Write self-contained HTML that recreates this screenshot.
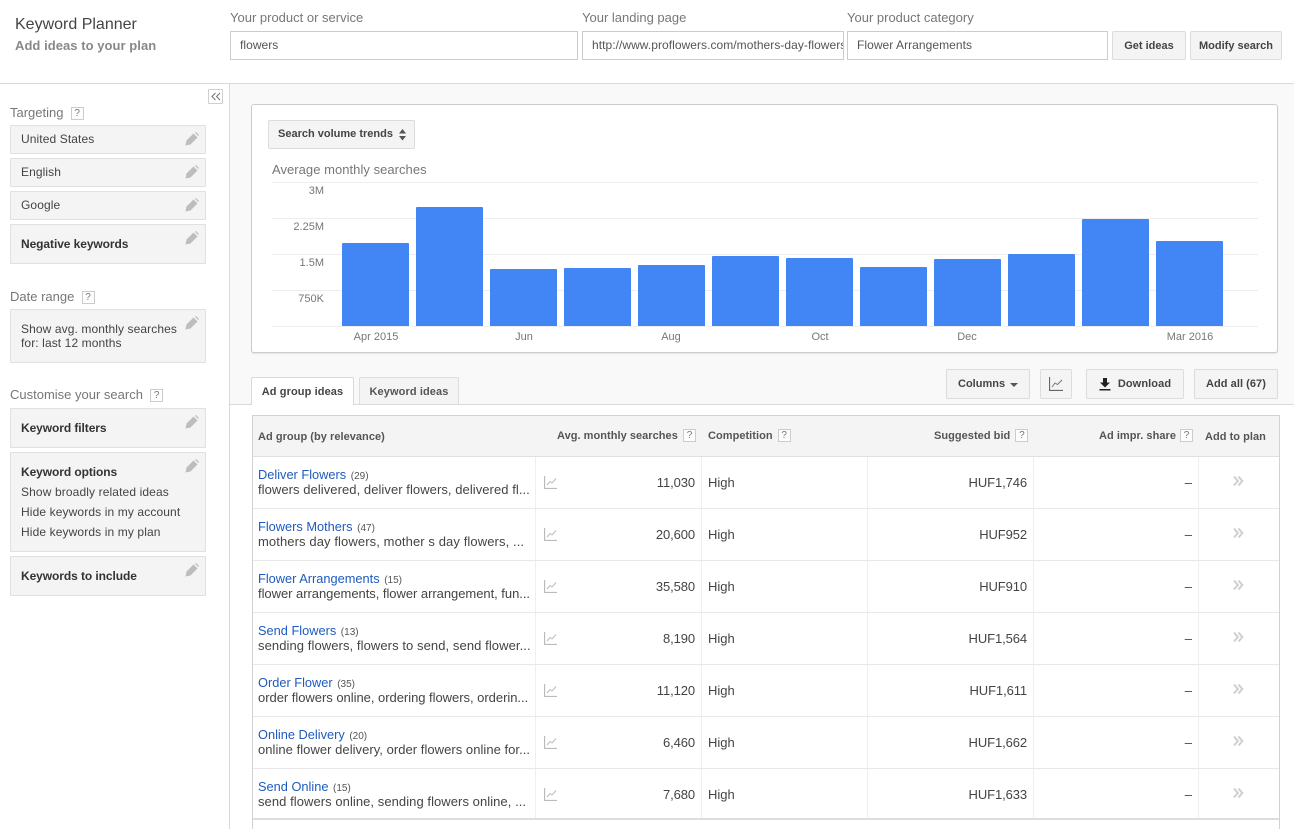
<!DOCTYPE html>
<html><head><meta charset="utf-8">
<style>
html,body{margin:0;padding:0;background:#fff}
html{width:1294px;height:829px;overflow:hidden}
body{width:1294px;height:829px;position:relative;overflow:hidden;font-family:"Liberation Sans",sans-serif;font-size:12px;color:#444}
div,span.a,a,svg.a{position:absolute;box-sizing:border-box;white-space:nowrap}
.lab{font-size:13px;color:#777;line-height:16px}
.inp{top:31px;height:29px;border:1px solid #ccc;background:#fff;font-size:12px;color:#555;line-height:27px;padding-left:9px;overflow:hidden;letter-spacing:.05px}
.btn{background:#f4f4f4;border:1px solid #dcdcdc;border-radius:2px;font-weight:bold;font-size:11px;color:#444;text-align:center}
.q{display:inline-block;width:13px;height:13px;border:1px solid #ccc;font-size:10px;line-height:11px;text-align:center;color:#777;font-weight:normal;box-sizing:border-box;background:#fdfdfd;vertical-align:1px;letter-spacing:0}
.box{left:10px;width:196px;background:#f4f4f4;border:1px solid #e0e0e0;border-radius:1px;color:#444;font-size:12px;padding-left:10px;letter-spacing:.1px}
.box b{color:#333;letter-spacing:-.08px}
.pen{left:185px;width:14px;height:14px}
.bar{background:#4285f4;width:67px;border-radius:1px 1px 0 0}
.grid{left:272px;width:986px;height:1px;background:#eee}
.yl{left:272px;width:52px;text-align:right;font-size:11px;color:#777;line-height:14px}
.xl{top:330px;width:80px;text-align:center;font-size:11px;color:#777;line-height:14px}
.rl{left:253px;width:1026px;height:1px;background:#e8e8e8}
.vl{width:1px;background:#efefef;top:457px;height:361px}
.n{left:258px;font-size:12.8px;line-height:15px;color:#1f5bbd}
.n small{font-size:10px;color:#555;margin-left:1px}
.k{left:258px;width:276px;font-size:13px;line-height:14px;color:#444;overflow:hidden}
.s{left:600px;width:95px;text-align:right;font-size:13px;color:#444;line-height:18px;letter-spacing:-.1px}
.h{left:708px;font-size:13px;color:#444;line-height:18px}
.p{left:900px;width:127px;text-align:right;font-size:13px;color:#444;line-height:18px;letter-spacing:-.1px}
.d{left:1170px;width:22px;text-align:right;font-size:13px;color:#444;line-height:18px}
.c{left:1233px;width:11px;height:10px}
.th{top:429px;font-weight:bold;font-size:11px;color:#555;line-height:14px;letter-spacing:.04px}
.sp{left:544px;width:13px;height:13px}
</style></head>
<body>
<svg width="0" height="0" style="position:absolute"><defs>
<symbol id="pen" viewBox="0 0 14 14"><path d="M.5 13.500l1-5 7-7 4 4-7 7z" fill="#bdbdbd"/><path d="M10 .8l1-.8 3 3-.8 1z" fill="#bdbdbd"/></symbol>
<symbol id="sp" viewBox="0 0 13 13"><path d="M.5 0v12.500H13" fill="none" stroke="#bbb" stroke-width="1.300"/><path d="M3 9l3-3.500 2 1.500 4-4.500" fill="none" stroke="#bbb" stroke-width="1"/></symbol>
<symbol id="chev" viewBox="0 0 11 10"><path d="M1 .5l3.800 4.500L1 9.500M5.500 .5L9.300 5 5.500 9.500" fill="none" stroke="#cfcfcf" stroke-width="2"/></symbol>
</defs></svg>

<!-- Header -->
<div style="left:15px;top:15px;font-size:16px;line-height:19px;color:#444">Keyword Planner</div>
<div style="left:15px;top:38px;font-size:13px;font-weight:bold;line-height:16px;color:#888;letter-spacing:.05px">Add ideas to your plan</div>
<div class="lab" style="left:230px;top:10px">Your product or service</div>
<div class="lab" style="left:582px;top:10px">Your landing page</div>
<div class="lab" style="left:847px;top:10px">Your product category</div>
<div class="inp" style="left:230px;width:348px">flowers</div>
<div class="inp" style="left:582px;width:262px">http://www.proflowers.com/mothers-day-flowers</div>
<div class="inp" style="left:847px;width:261px">Flower Arrangements</div>
<div class="btn" style="left:1112px;top:31px;width:74px;height:29px;line-height:28px">Get ideas</div>
<div class="btn" style="left:1190px;top:31px;width:92px;height:29px;line-height:28px">Modify search</div>
<div style="left:0;top:83px;width:1294px;height:1px;background:#d9d9d9"></div>

<!-- Right grey panel -->
<div style="left:230px;top:84px;width:1064px;height:320px;background:#f9f9f9"></div>
<div style="left:230px;top:404px;width:1064px;height:1px;background:#d9d9d9"></div>
<div style="left:229px;top:84px;width:1px;height:745px;background:#d9d9d9"></div>

<!-- Sidebar -->
<div style="left:208px;top:89px;width:15px;height:15px;border:1px solid #d0d0d0;border-radius:1px;background:#fff"></div>
<svg class="a" style="left:211px;top:92px" width="10" height="9" viewBox="0 0 10 9"><path d="M4.500 1L1 4.500 4.500 8M9 1L5.500 4.500 9 8" fill="none" stroke="#777" stroke-width="1.100"/></svg>

<div class="lab" style="left:10px;top:105px">Targeting &nbsp;<span class="q">?</span></div>
<div class="box" style="top:125px;height:29px;line-height:26px">United States</div>
<svg class="a pen" style="top:132px"><use href="#pen"/></svg>
<div class="box" style="top:158px;height:29px;line-height:26px">English</div>
<svg class="a pen" style="top:165px"><use href="#pen"/></svg>
<div class="box" style="top:191px;height:29px;line-height:26px">Google</div>
<svg class="a pen" style="top:198px"><use href="#pen"/></svg>
<div class="box" style="top:224px;height:40px;line-height:38px"><b>Negative keywords</b></div>
<svg class="a pen" style="top:231px"><use href="#pen"/></svg>

<div class="lab" style="left:10px;top:289px">Date range &nbsp;<span class="q">?</span></div>
<div class="box" style="top:309px;height:54px;padding-top:12px;line-height:14px">Show avg. monthly searches<br>for: last 12 months</div>
<svg class="a pen" style="top:316px"><use href="#pen"/></svg>

<div class="lab" style="left:10px;top:387px">Customise your search &nbsp;<span class="q">?</span></div>
<div class="box" style="top:408px;height:40px;line-height:38px"><b>Keyword filters</b></div>
<svg class="a pen" style="top:415px"><use href="#pen"/></svg>
<div class="box" style="top:452px;height:100px;padding-top:9px;line-height:20px;letter-spacing:.12px"><b>Keyword options</b><br>Show broadly related ideas<br>Hide keywords in my account<br>Hide keywords in my plan</div>
<svg class="a pen" style="top:459px"><use href="#pen"/></svg>
<div class="box" style="top:556px;height:40px;line-height:38px"><b>Keywords to include</b></div>
<svg class="a pen" style="top:563px"><use href="#pen"/></svg>

<!-- Chart card -->
<div style="left:251px;top:104px;width:1027px;height:249px;background:#fff;border:1px solid #ccc;border-radius:3px;box-shadow:0 1px 1px #e4e4e4"></div>
<div class="btn" style="left:268px;top:120px;width:147px;height:29px;line-height:27px;text-align:left;padding-left:9px;font-size:11px">Search volume trends</div>
<svg class="a" style="left:398px;top:128px" width="9" height="13" viewBox="0 0 9 13"><path d="M4.500 1L8 5.500H1zM4.500 12.500L1 8h7z" fill="#555"/></svg>
<div style="left:272px;top:162px;font-size:13px;line-height:16px;color:#777;letter-spacing:.04px">Average monthly searches</div>
<div class="grid" style="top:182px"></div>
<div class="grid" style="top:218px"></div>
<div class="grid" style="top:254px"></div>
<div class="grid" style="top:290px"></div>
<div class="grid" style="top:326px"></div>
<div class="yl" style="top:184px">3M</div>
<div class="yl" style="top:220px">2.25M</div>
<div class="yl" style="top:256px">1.5M</div>
<div class="yl" style="top:292px">750K</div>

<div class="bar" style="left:342px;top:243px;height:83px"></div>
<div class="bar" style="left:416px;top:207px;height:119px"></div>
<div class="bar" style="left:490px;top:269px;height:57px"></div>
<div class="bar" style="left:564px;top:268px;height:58px"></div>
<div class="bar" style="left:638px;top:265px;height:61px"></div>
<div class="bar" style="left:712px;top:256px;height:70px"></div>
<div class="bar" style="left:786px;top:258px;height:68px"></div>
<div class="bar" style="left:860px;top:267px;height:59px"></div>
<div class="bar" style="left:934px;top:259px;height:67px"></div>
<div class="bar" style="left:1008px;top:254px;height:72px"></div>
<div class="bar" style="left:1082px;top:219px;height:107px"></div>
<div class="bar" style="left:1156px;top:241px;height:85px"></div>

<div class="xl" style="left:336px">Apr 2015</div>
<div class="xl" style="left:484px">Jun</div>
<div class="xl" style="left:631px">Aug</div>
<div class="xl" style="left:780px">Oct</div>
<div class="xl" style="left:927px">Dec</div>
<div class="xl" style="left:1150px">Mar 2016</div>

<!-- Tabs -->
<div style="left:251px;top:377px;width:103px;height:28px;background:#fff;border:1px solid #d9d9d9;border-bottom:0;border-radius:2px 2px 0 0;font-weight:bold;font-size:11px;line-height:28px;text-align:center;color:#444;letter-spacing:.1px">Ad group ideas</div>
<div style="left:359px;top:377px;width:100px;height:27px;background:#f4f4f4;border:1px solid #dedede;border-bottom:0;border-radius:2px 2px 0 0;font-weight:bold;font-size:11px;line-height:28px;text-align:center;color:#555;letter-spacing:.1px">Keyword ideas</div>

<!-- Toolbar -->
<div class="btn" style="left:946px;top:369px;width:84px;height:30px;line-height:29px;text-align:left;padding-left:11px">Columns</div>
<svg class="a" style="left:1010px;top:383px" width="8" height="4" viewBox="0 0 8 4"><path d="M0 0h8L4 4z" fill="#555"/></svg>
<div class="btn" style="left:1040px;top:369px;width:32px;height:30px"></div>
<svg class="a" style="left:1049px;top:377px" width="14" height="14" viewBox="0 0 14 14"><path d="M.5 0v13.500H14" fill="none" stroke="#666" stroke-width="1.200"/><path d="M3 10l3-4 2.500 1.500L13 3" fill="none" stroke="#777" stroke-width="1"/></svg>
<div class="btn" style="left:1086px;top:369px;width:98px;height:30px;line-height:29px;padding-left:19px;letter-spacing:.1px">Download</div>
<svg class="a" style="left:1099px;top:378px" width="12" height="13" viewBox="0 0 12 13"><path d="M4 0h4v4.500h3L6 9.500 1 4.500h3zM0.500 11h11v1.500H.5z" fill="#222"/></svg>
<div class="btn" style="left:1194px;top:369px;width:84px;height:30px;line-height:29px;letter-spacing:.05px">Add all (67)</div>

<!-- Table -->
<div style="left:252px;top:415px;width:1028px;height:414px;border:1px solid #d2d2d2;border-bottom:0"></div>
<div style="left:253px;top:416px;width:1026px;height:40px;background:#f4f4f4"></div>
<div class="rl" style="top:456px;background:#e0e0e0"></div>
<div class="th" style="left:258px;top:430px">Ad group (by relevance)</div>
<div class="th" style="left:557px">Avg. monthly searches <span class="q" style="margin-left:2px">?</span></div>
<div class="th" style="left:708px">Competition <span class="q" style="margin-left:2px">?</span></div>
<div class="th" style="left:934px">Suggested bid <span class="q" style="margin-left:2px">?</span></div>
<div class="th" style="left:1099px">Ad impr. share <span class="q" style="margin-left:1px">?</span></div>
<div class="th" style="left:1205px;top:430px">Add to plan</div>

<div class="vl" style="left:535px"></div>
<div class="vl" style="left:701px"></div>
<div class="vl" style="left:867px"></div>
<div class="vl" style="left:1033px"></div>
<div class="vl" style="left:1198px"></div>

<div class="rl" style="top:508px"></div>
<div class="rl" style="top:560px"></div>
<div class="rl" style="top:612px"></div>
<div class="rl" style="top:664px"></div>
<div class="rl" style="top:716px"></div>
<div class="rl" style="top:768px"></div>
<div class="rl" style="top:818px;height:2px;background:#ddd"></div>

<!-- Row 1 -->
<div class="n" style="top:467px">Deliver Flowers <small>(29)</small></div>
<div class="k" style="top:483px;letter-spacing:.06px">flowers delivered, deliver flowers, delivered fl...</div>
<svg class="a sp" style="top:476px"><use href="#sp"/></svg>
<div class="s" style="top:474px">11,030</div><div class="h" style="top:474px">High</div><div class="p" style="top:474px">HUF1,746</div><div class="d" style="top:474px">–</div>
<svg class="a c" style="top:476px"><use href="#chev"/></svg>
<!-- Row 2 -->
<div class="n" style="top:519px">Flowers Mothers <small>(47)</small></div>
<div class="k" style="top:535px;letter-spacing:.1px">mothers day flowers, mother s day flowers, ...</div>
<svg class="a sp" style="top:528px"><use href="#sp"/></svg>
<div class="s" style="top:526px">20,600</div><div class="h" style="top:526px">High</div><div class="p" style="top:526px">HUF952</div><div class="d" style="top:526px">–</div>
<svg class="a c" style="top:528px"><use href="#chev"/></svg>
<!-- Row 3 -->
<div class="n" style="top:571px">Flower Arrangements <small>(15)</small></div>
<div class="k" style="top:587px;letter-spacing:-.04px">flower arrangements, flower arrangement, fun...</div>
<svg class="a sp" style="top:580px"><use href="#sp"/></svg>
<div class="s" style="top:578px">35,580</div><div class="h" style="top:578px">High</div><div class="p" style="top:578px">HUF910</div><div class="d" style="top:578px">–</div>
<svg class="a c" style="top:580px"><use href="#chev"/></svg>
<!-- Row 4 -->
<div class="n" style="top:623px">Send Flowers <small>(13)</small></div>
<div class="k" style="top:639px;letter-spacing:.08px">sending flowers, flowers to send, send flower...</div>
<svg class="a sp" style="top:632px"><use href="#sp"/></svg>
<div class="s" style="top:630px">8,190</div><div class="h" style="top:630px">High</div><div class="p" style="top:630px">HUF1,564</div><div class="d" style="top:630px">–</div>
<svg class="a c" style="top:632px"><use href="#chev"/></svg>
<!-- Row 5 -->
<div class="n" style="top:675px">Order Flower <small>(35)</small></div>
<div class="k" style="top:691px;letter-spacing:-.03px">order flowers online, ordering flowers, orderin...</div>
<svg class="a sp" style="top:684px"><use href="#sp"/></svg>
<div class="s" style="top:682px">11,120</div><div class="h" style="top:682px">High</div><div class="p" style="top:682px">HUF1,611</div><div class="d" style="top:682px">–</div>
<svg class="a c" style="top:684px"><use href="#chev"/></svg>
<!-- Row 6 -->
<div class="n" style="top:727px">Online Delivery <small>(20)</small></div>
<div class="k" style="top:743px;letter-spacing:.04px">online flower delivery, order flowers online for...</div>
<svg class="a sp" style="top:736px"><use href="#sp"/></svg>
<div class="s" style="top:734px">6,460</div><div class="h" style="top:734px">High</div><div class="p" style="top:734px">HUF1,662</div><div class="d" style="top:734px">–</div>
<svg class="a c" style="top:736px"><use href="#chev"/></svg>
<!-- Row 7 -->
<div class="n" style="top:779px">Send Online <small>(15)</small></div>
<div class="k" style="top:795px;letter-spacing:.06px">send flowers online, sending flowers online, ...</div>
<svg class="a sp" style="top:788px"><use href="#sp"/></svg>
<div class="s" style="top:786px">7,680</div><div class="h" style="top:786px">High</div><div class="p" style="top:786px">HUF1,633</div><div class="d" style="top:786px">–</div>
<svg class="a c" style="top:788px"><use href="#chev"/></svg>
</body></html>
